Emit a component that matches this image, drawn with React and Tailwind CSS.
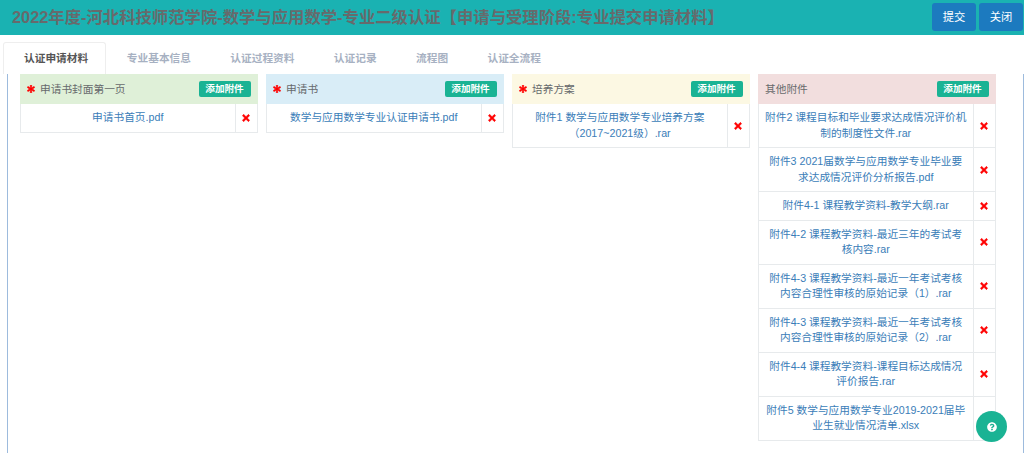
import React from "react";
import { FaAsterisk, FaTimes, FaQuestionCircle } from "react-icons/fa";

const columns = [
  { title: "申请书封面第一页", req: true, head: "bg-[#dff0d8]", files: [["申请书首页.pdf", true]] },
  { title: "申请书", req: true, head: "bg-[#d9edf7]", files: [["数学与应用数学专业认证申请书.pdf", true]] },
  { title: "培养方案", req: true, head: "bg-[#fcf8e3]", files: [["附件1 数学与应用数学专业培养方案（2017~2021级）.rar", true]] },
  {
    title: "其他附件", req: false, head: "bg-[#f2dede]",
    files: [
      ["附件2 课程目标和毕业要求达成情况评价机制的制度性文件.rar", true],
      ["附件3 2021届数学与应用数学专业毕业要求达成情况评价分析报告.pdf", true],
      ["附件4-1 课程教学资料-教学大纲.rar", true],
      ["附件4-2 课程教学资料-最近三年的考试考核内容.rar", true],
      ["附件4-3 课程教学资料-最近一年考试考核内容合理性审核的原始记录（1）.rar", true],
      ["附件4-3 课程教学资料-最近一年考试考核内容合理性审核的原始记录（2）.rar", true],
      ["附件4-4 课程教学资料-课程目标达成情况评价报告.rar", true],
      ["附件5 数学与应用数学专业2019-2021届毕业生就业情况清单.xlsx", false],
    ],
  },
];

const tabs = ["认证申请材料", "专业基本信息", "认证过程资料", "认证记录", "流程图", "认证全流程"];

function Column({ col }) {
  return (
    <div className="w-[237.5px] shrink-0 self-start">
      <div className={`h-[30px] flex items-center justify-between pl-[7px] pr-[7px] ${col.head}`}>
        <div className="flex items-center text-[10.7px] text-[#676a6c]">
          {col.req && <FaAsterisk stroke="currentColor" strokeWidth={40} className="text-[#ff0000] w-[8px] h-[8px] mr-[5px]" />}
          <span>{col.title}</span>
        </div>
        <span className="h-[16px] w-[52px] rounded-[2px] bg-[#1ab394] text-white text-[9.6px] font-bold flex items-center justify-center">添加附件</span>
      </div>
      {col.files.map(([name, del], i) => (
        <div key={i} className="flex border-b border-x border-[#e7eaec] bg-white">
          <div className="flex-1 min-w-0 py-[6px] px-[5px] text-center text-[10.7px] leading-[15.5px] text-[#3a7db8]">{name}</div>
          <div className="w-[22px] shrink-0 border-l border-[#e7eaec] flex items-center justify-center">
            {del && <FaTimes stroke="currentColor" strokeWidth={30} className="text-[#ff0000] w-[10px] h-[10px]" />}
          </div>
        </div>
      ))}
    </div>
  );
}

export default function App() {
  return (
    <div className="relative w-[1024px] h-[453px] overflow-hidden bg-white" style={{ fontFamily: '"Liberation Sans","Noto Sans CJK SC",sans-serif' }}>
      <header className="h-[34.5px] bg-[#1ab2b2] flex items-center justify-between pl-[12px] pr-[1px]">
        <h1 className="text-[16.35px] font-bold text-[#676a6c] whitespace-nowrap">2022年度-河北科技师范学院-数学与应用数学-专业二级认证【申请与受理阶段:专业提交申请材料】</h1>
        <div className="flex gap-[3px]">
          <button className="w-[44px] h-[28px] rounded-[3px] bg-[#1c7abf] text-white text-[11.3px]">提交</button>
          <button className="w-[44px] h-[28px] rounded-[3px] bg-[#1c7abf] text-white text-[11.3px]">关闭</button>
        </div>
      </header>
      <nav className="h-[39.5px] flex items-end pl-[3px] pt-[7px]">
        {tabs.map((t, i) => (
          <div
            key={t}
            className={i === 0
              ? "h-[32px] pl-[20px] pr-[17px] mr-[1px] flex items-center text-[10.7px] font-bold text-[#555] bg-white border border-b-0 border-[#eeeeee] rounded-t-[3px]"
              : "h-[32px] px-[19.7px] flex items-center text-[10.7px] font-bold text-[#a7b1c2]"}
          >
            {t}
          </div>
        ))}
      </nav>
      <main className="h-[379px] ml-[7px] border-x border-[#9dbbdd] pl-[12px] flex gap-[8.5px] items-start">
        {columns.map((c) => <Column key={c.title} col={c} />)}
      </main>
      <button className="absolute left-[976px] top-[411px] w-[31px] h-[31px] rounded-full bg-[#1ab394] flex items-center justify-center">
        <FaQuestionCircle className="text-white w-[10px] h-[10px]" />
      </button>
    </div>
  );
}
